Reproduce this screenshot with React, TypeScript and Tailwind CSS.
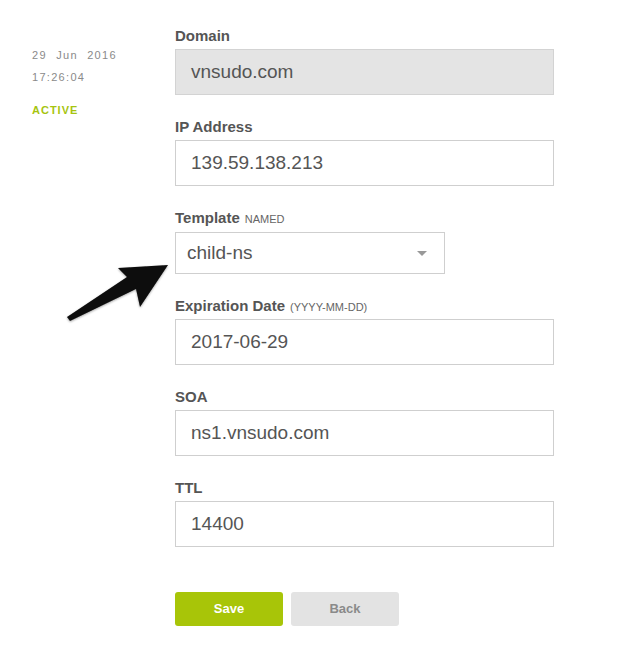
import React from "react";

const font = { fontFamily: '"Liberation Sans", Arial, Helvetica, sans-serif' };

function Label({ children, extra }: { children: React.ReactNode; extra?: string }) {
  return (
    <div className="h-[18px] leading-[18px] mb-[4px] text-[15px] font-bold text-[#555] whitespace-nowrap">
      {children}
      {extra && <span className="ml-[5px] text-[11px] font-normal text-[#666]">{extra}</span>}
    </div>
  );
}

function Field({ label, extra, value, disabled }: { label: string; extra?: string; value: string; disabled?: boolean }) {
  return (
    <div className="mb-[23px]">
      <Label extra={extra}>{label}</Label>
      <div
        className={
          "h-[46px] w-[379px] border flex items-center pl-[15px] text-[19px] text-[#555] " +
          (disabled ? "bg-[#e4e4e4] border-[#d3d3d3]" : "bg-white border-[#cfcfcf]")
        }
      >
        {value}
      </div>
    </div>
  );
}

export default function App() {
  return (
    <div className="relative w-[619px] h-[651px] bg-white overflow-hidden" style={font}>
      <div className="flex pt-[27px]">
        <div className="w-[175px] pl-[32px] pt-[21px] shrink-0">
          <div className="text-[11px] leading-[14px] text-[#8a8a8a] tracking-[1.3px] [word-spacing:5px]">29 Jun 2016</div>
          <div className="mt-[8px] text-[11px] leading-[14px] text-[#8a8a8a] tracking-[1.3px]">17:26:04</div>
          <div className="mt-[19px] text-[11px] leading-[14px] font-bold text-[#a6c40f] tracking-[1px]">ACTIVE</div>
        </div>
        <div className="w-[379px]">
          <Field label="Domain" value="vnsudo.com" disabled />
          <Field label="IP Address" value="139.59.138.213" />
          <div className="mb-[23px]">
            <Label extra="NAMED">Template</Label>
            <div className="mt-[5px] h-[42px] w-[270px] border border-[#cfcfcf] bg-white flex items-center justify-between pl-[11px] pr-[17px] text-[19px] text-[#555]">
              <span>child-ns</span>
              <svg width="10" height="5" viewBox="0 0 10 5">
                <path d="M0 0 L10 0 L5 5 Z" fill="#999" />
              </svg>
            </div>
          </div>
          <Field label="Expiration Date" extra="(YYYY-MM-DD)" value="2017-06-29" />
          <Field label="SOA" value="ns1.vnsudo.com" />
          <Field label="TTL" value="14400" />
          <div className="flex gap-[8px] mt-[45px]">
            <button className="w-[108px] h-[34px] rounded-[3px] bg-[#a8c508] text-white text-[13px] font-bold">Save</button>
            <button className="w-[108px] h-[34px] rounded-[3px] bg-[#e3e3e3] text-[#8a8a8a] text-[13px] font-bold">Back</button>
          </div>
        </div>
      </div>
      <svg className="absolute left-0 top-0 pointer-events-none" width="619" height="651">
        <defs>
          <filter id="sh" x="-20%" y="-20%" width="140%" height="140%">
            <feDropShadow dx="0" dy="1" stdDeviation="1.2" floodColor="#000" floodOpacity="0.35" />
          </filter>
        </defs>
        <path
          d="M168 265 L118 268 L127 277 L67 317 L70 321 L136 289 L140 307 Z"
          fill="#0a0a0a"
          filter="url(#sh)"
        />
      </svg>
    </div>
  );
}
